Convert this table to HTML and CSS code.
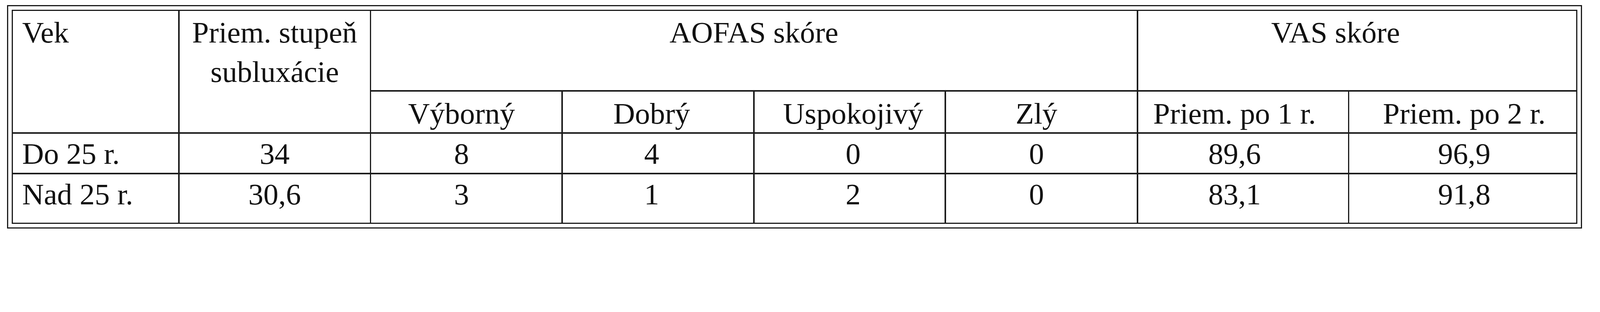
FILE: index.html
```html
<!DOCTYPE html>
<html lang="sk">
<head>
<meta charset="utf-8">
<title>Výsledky podľa veku</title>
<link rel="stylesheet" href="styles.css">
</head>
<body>
<div class="frame">
  <div class="grid">
    <div class="cell r1 left span-rows">Vek</div>
    <div class="cell r1 span-rows">Priem. stupeň<br>subluxácie</div>
    <div class="cell r1 span-aofas">AOFAS skóre</div>
    <div class="cell r1 span-vas vas-head">VAS skóre</div>

    <div class="cell r2 k3">Výborný</div>
    <div class="cell r2 k4">Dobrý</div>
    <div class="cell r2 k5">Uspokojivý</div>
    <div class="cell r2 k6">Zlý</div>
    <div class="cell r2 k7">Priem. po 1 r.</div>
    <div class="cell r2 k8">Priem. po 2 r.</div>

    <div class="cell rd left">Do 25 r.</div>
    <div class="cell rd">34</div>
    <div class="cell rd k3">8</div>
    <div class="cell rd k4">4</div>
    <div class="cell rd k5">0</div>
    <div class="cell rd k6">0</div>
    <div class="cell rd k7">89,6</div>
    <div class="cell rd k8">96,9</div>

    <div class="cell rd left">Nad 25 r.</div>
    <div class="cell rd">30,6</div>
    <div class="cell rd k3">3</div>
    <div class="cell rd k4">1</div>
    <div class="cell rd k5">2</div>
    <div class="cell rd k6">0</div>
    <div class="cell rd k7">83,1</div>
    <div class="cell rd k8">91,8</div>
  </div>
</div>
</body>
</html>
```
FILE: styles.css
```css
html, body {
  margin: 0;
  padding: 0;
  background: #ffffff;
}

body {
  font-family: "Liberation Serif", "Times New Roman", serif;
  color: #111111;
}

.frame {
  width: max-content;
  margin: 13.07px 0 0 17.69px;
  border: 3.08px solid #1b1b1b;
  padding: 9.23px;
}

.grid {
  display: grid;
  grid-template-columns: 422.98px 486.81px 486.81px 486.81px 486.04px 488.35px 536.8px 580.63px;
  grid-template-rows: 203.03px 103.82px 99.98px 124.59px;
  gap: 3.85px;
  border: 3.85px solid #1b1b1b;
  background: #1b1b1b;
}

.cell {
  background: #ffffff;
  font-size: 76.9px;
  line-height: 100.75px;
  text-align: center;
  white-space: nowrap;
  overflow: hidden;
}

.left {
  text-align: left;
  padding-left: 23.8px;
}

.span-rows {
  grid-row: span 2;
}

.span-aofas {
  grid-column: span 4;
}

.span-vas {
  grid-column: span 2;
}

.vas-head {
  padding-right: 110.7px;
}

.r1 {
  padding-top: 4.6px;
}

.r2 {
  padding-top: 5.4px;
}

.rd {
  padding-top: 1.5px;
}

.k3 { padding-right: 24.6px; }
.k4 { padding-right: 32.3px; }
.k5 { padding-left: 18.5px; }
.k6 { padding-right: 24.6px; }
.k7 { padding-right: 43.1px; }
.k8 { padding-left: 7.7px; }
```
